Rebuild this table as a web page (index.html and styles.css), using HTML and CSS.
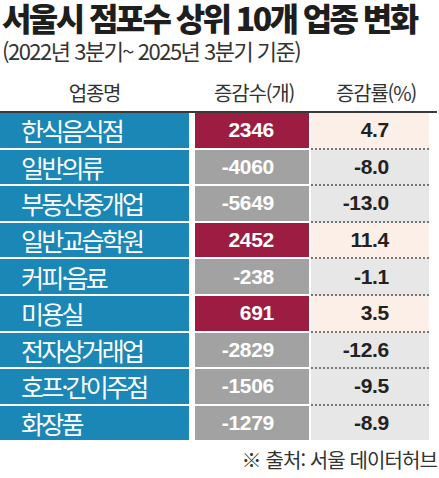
FILE: index.html
```html
<!DOCTYPE html>
<html lang="ko">

<head>
    <meta charset="UTF-8">
    <meta name="viewport" content="width=device-width, initial-scale=1.0">
    <title>서울시 점포수 상위 10개 업종 변화</title>
    <link rel="stylesheet" href="styles.css">
</head>

<body>
    <div class="chart">
        <h1 class="title">서울시 점포수 상위 10개 업종 변화</h1>
        <p class="subtitle">(2022년 3분기~ 2025년 3분기 기준)</p>

        <div class="head">
            <div class="head-name">업종명</div>
            <div class="head-num">증감수(개)</div>
            <div class="head-rate">증감률(%)</div>
        </div>

        <div class="rows">
            <div class="name">한식음식점</div>
            <div class="num up">2346</div>
            <div class="rate up">4.7</div>

            <div class="name">일반의류</div>
            <div class="num down">-4060</div>
            <div class="rate down">-8.0</div>

            <div class="name">부동산중개업</div>
            <div class="num down">-5649</div>
            <div class="rate down">-13.0</div>

            <div class="name">일반교습학원</div>
            <div class="num up">2452</div>
            <div class="rate up">11.4</div>

            <div class="name">커피·음료</div>
            <div class="num down">-238</div>
            <div class="rate down">-1.1</div>

            <div class="name">미용실</div>
            <div class="num up">691</div>
            <div class="rate up">3.5</div>

            <div class="name">전자상거래업</div>
            <div class="num down">-2829</div>
            <div class="rate down">-12.6</div>

            <div class="name">호프·간이주점</div>
            <div class="num down">-1506</div>
            <div class="rate down">-9.5</div>

            <div class="name">화장품</div>
            <div class="num down">-1279</div>
            <div class="rate down last">-8.9</div>
        </div>

        <p class="source">※ 출처: 서울 데이터허브</p>
    </div>
</body>

</html>
```

FILE: styles.css
```css
body {
    margin: 0;
    background: #fff;
    font-family: "Noto Sans CJK KR", "Noto Sans", sans-serif;
    color: #2a2a2a;
}

.chart {
    width: 439px;
}

.title {
    margin: 0;
    padding-left: 2px;
    font-size: 32px;
    font-weight: 900;
    line-height: 35px;
    letter-spacing: -2.6px;
    white-space: nowrap;
    color: #1e1e1e;
}

.subtitle {
    margin: 0;
    padding-left: 2px;
    font-size: 22px;
    line-height: 31px;
    letter-spacing: -1.5px;
    color: #333;
}

.head {
    display: grid;
    grid-template-columns: 189px 126px 122px;
    height: 37px;
    margin-top: 8px;
    border-bottom: 2px solid #3a3a3a;
    width: 437px;
    align-items: center;
    font-size: 20px;
    letter-spacing: -1.2px;
    color: #333;
}

.head-name,
.head-num,
.head-rate {
    text-align: center;
}

.head-num {
    padding-left: 4px;
}

.rows {
    display: grid;
    grid-template-columns: 189px 120px 120px;
    grid-auto-rows: 34.6px;
    row-gap: 2px;
    width: 437px;
}

.name {
    display: flex;
    align-items: center;
    background: #1a87b6;
    color: #fff;
    padding-left: 21px;
    font-size: 25px;
    letter-spacing: -2.8px;
    white-space: nowrap;
}

.num {
    display: flex;
    align-items: center;
    justify-content: flex-end;
    margin-left: 6px;
    padding-right: 35px;
    font-family: "Liberation Sans", sans-serif;
    font-size: 21px;
    font-weight: 700;
    letter-spacing: -0.3px;
    color: #fff;
}

.num.up {
    background: #9d1c41;
}

.num.down {
    background: #a2a2a2;
}

.rate {
    display: flex;
    align-items: center;
    justify-content: flex-end;
    margin-left: 2px;
    margin-bottom: -2px;
    padding-right: 40px;
    border-bottom: 2px dotted #777;
    font-family: "Liberation Sans", sans-serif;
    font-size: 21px;
    font-weight: 700;
    letter-spacing: -0.3px;
    color: #222;
}

.rate.up {
    background: #fcefe7;
}

.rate.down {
    background: #e7e7e7;
}

.rate.last {
    border-bottom: none;
    margin-bottom: 0;
}

.source {
    margin: 9px 2px 0 0;
    text-align: right;
    font-size: 20px;
    line-height: 22px;
    letter-spacing: -0.9px;
    color: #333;
}
```
